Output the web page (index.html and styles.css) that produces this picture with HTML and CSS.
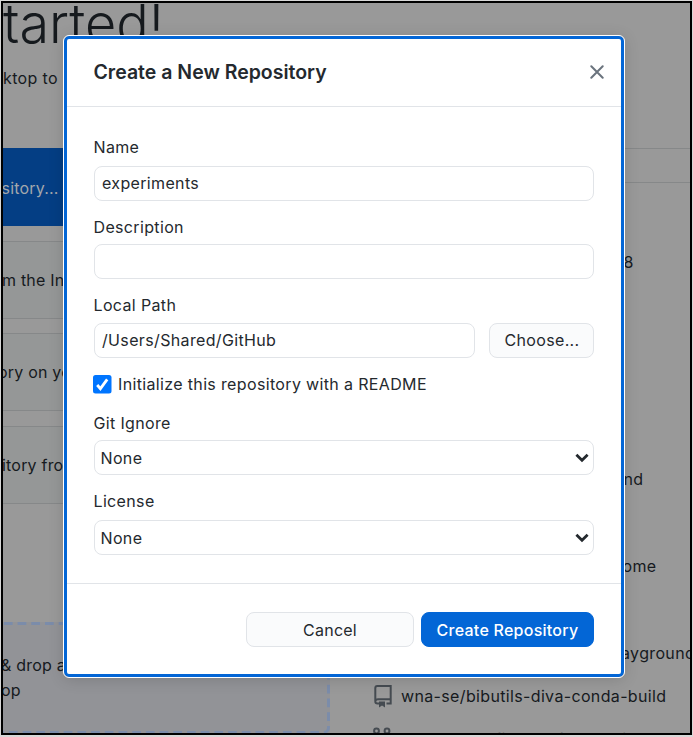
FILE: index.html
```html
<!DOCTYPE html>
<html lang="en">
<head>
<meta charset="utf-8">
<title>Create a New Repository</title>
<link rel="stylesheet" href="styles.css">
</head>
<body>
<div class="window">
  <main class="start">
    <section class="actions">
      <h1>tarted!</h1>
      <p class="intro">ktop to</p>
      <div class="cards">
        <div class="card primary">sitory...</div>
        <div class="card">m the In</div>
        <div class="card shifted">ory on yo</div>
        <div class="card">itory fro</div>
      </div>
      <div class="drop">
        <svg class="drop-outline" width="360" height="112"><rect x="1.5" y="1.5" width="357" height="109" rx="5"/></svg>
        <p>&amp; drop a<br>op</p>
      </div>
    </section>
    <section class="repos">
      <div class="filter"></div>
      <ul>
        <li class="tail r1">8</li>
        <li class="tail r2">nd</li>
        <li class="tail r3">ome</li>
        <li class="tail r4">ayground</li>
        <li class="repo"><svg width="24" height="26" viewBox="0 0 24 26"><path d="M7.5 20.5H5.5a2.2 2.2 0 0 1-2.2-2.2V5a2 2 0 0 1 2-2h13.4v17.5h-4.2M3.5 17.800q.5-1.600 2.500-1.600h12.700"/><path class="fill" d="M7 18.500h6v6l-3-2-3 2z"/></svg>wna-se/bibutils-diva-conda-build</li>
        <li class="repo last"><svg width="24" height="26" viewBox="0 0 24 26"><circle cx="4.500" cy="5" r="2.400"/><circle cx="15" cy="5" r="2.400"/></svg>wna-se/config-nextflow-main-d</li>
      </ul>
    </section>
  </main>
  <div class="dialog" role="dialog" aria-label="Create a New Repository">
    <header>
      <h2>Create a New Repository</h2>
      <svg class="close" width="14" height="14" viewBox="0 0 14 14"><path d="M1.300 1.300l11.400 11.400M12.700 1.300L1.300 12.700"/></svg>
    </header>
    <form>
      <div class="field"><label>Name</label><div class="control">experiments</div></div>
      <div class="field"><label>Description</label><div class="control"></div></div>
      <div class="field"><label>Local Path</label>
        <div class="path"><div class="control">/Users/Shared/GitHub</div><button type="button" class="choose">Choose...</button></div>
      </div>
      <div class="check"><svg width="19" height="19" viewBox="0 0 19 19"><rect width="18.500" height="18.500" rx="2.500"/><path d="M4.200 10l3.200 3.700L14.200 4.400"/></svg><span>Initialize this repository with a README</span></div>
      <div class="field"><label>Git Ignore</label><div class="control select"><span>None</span><svg width="14" height="10" viewBox="0 0 14 10"><path d="M1.400 1.800L7 7.200l5.600-5.400"/></svg></div></div>
      <div class="field"><label>License</label><div class="control select"><span>None</span><svg width="14" height="10" viewBox="0 0 14 10"><path d="M1.400 1.800L7 7.200l5.600-5.400"/></svg></div></div>
    </form>
    <footer>
      <button type="button" class="cancel">Cancel</button>
      <button type="button" class="submit">Create Repository</button>
    </footer>
  </div>
</div>
</body>
</html>
```
FILE: styles.css
```css
* { box-sizing: border-box; }
body { margin: 0; height: 737px; overflow: hidden; background: #d8d8d8; font: 16px/24px Inter, "Liberation Sans", sans-serif; letter-spacing: .35px; color: #24292e; }
h1, h2, p, ul { margin: 0; padding: 0; }
button { font: inherit; letter-spacing: inherit; color: inherit; padding: 0; }
svg { display: block; flex: none; }
.window { width: 691px; height: 734px; margin: 1px 0 0 1px; border: 2px solid #000; overflow: hidden; position: relative; background: #999; }
.start { display: grid; grid-template-columns: 327px 1fr; height: 730px; color: #161a1e; white-space: nowrap; }
.actions, .repos { min-width: 0; overflow: hidden; }
.actions { display: flex; flex-direction: column; }
h1 { height: 63px; font-size: 54px; line-height: 42px; font-weight: 300; letter-spacing: 0; }
.intro { height: 82px; }
.cards { display: grid; gap: 14.500px; height: 474px; grid-auto-rows: 78px; align-content: start; }
.card { border: 1px solid #868889; background: #959797; border-left: 0; line-height: 77px; letter-spacing: .2px; text-indent: -1px; }
.card.shifted { text-indent: -5px; }
.card.primary { background: #043e84; border-color: #043e84; color: #a3a7ac; text-indent: -1.500px; line-height: 78px; }
.drop { height: 111px; background: #929397; position: relative; padding-top: 31px; line-height: 25px; letter-spacing: .2px; }
.drop p { margin-left: -2px; }
.drop-outline { position: absolute; right: 0; top: 0; fill: none; stroke: #7b8caa; stroke-width: 3; stroke-dasharray: 8.700 5; }
.filter { height: 35px; margin-top: 145px; border: solid #868889; border-width: 1px 0; }
ul { list-style: none; }
.tail { padding-left: 293.500px; height: 24px; }
.r1 { margin-top: 67px; }
.r2 { margin-top: 193px; }
.r3 { margin-top: 63px; padding-left: 292.500px; }
.r4 { margin-top: 63px; padding-left: 291px; }
.repo { display: flex; align-items: center; gap: 5px; height: 26px; margin: 18px 0 0 42px; }
.repo.last { margin-top: 17px; }
.repo svg { fill: none; stroke: #454b51; stroke-width: 2; }
.repo svg .fill { fill: #454b51; stroke: none; }
.dialog { position: absolute; left: 61px; top: 33px; width: 560px; height: 641px; border: 3px solid #0366d6; border-radius: 5px; outline: 1px solid #fff; background: #fff; box-shadow: 0 2px 16px rgba(0,0,0,.16); display: flex; flex-direction: column; }
header { height: 68px; border-bottom: 1px solid #e1e4e8; display: flex; align-items: center; justify-content: space-between; padding: 0 17px 2px 26.500px; }
h2 { font-size: 19.500px; font-weight: 600; letter-spacing: 0; }
.close { fill: none; stroke: #6a737d; stroke-width: 2; stroke-linecap: round; }
form { height: 476px; padding: 28px 27px 0 26.500px; display: grid; grid-template-rows: 80px 78px 79px 39px 78px 80px; align-content: start; }
.field { display: flex; flex-direction: column; padding-bottom: 14px; min-width: 0; }
.field label { flex: 1; }
.control { height: 35px; border: 1px solid #e1e4e8; border-radius: 8px; padding: 0 7.500px; line-height: 33px; flex: none; }
.path { display: flex; gap: 14px; }
.path .control { flex: 1; }
.choose { width: 105px; height: 35px; border: 1px solid #e1e4e8; border-radius: 8px; background: #fafbfc; padding: 0 0 1px 1px; }
.check { display: flex; align-items: center; height: 25px; gap: 6px; }
.check svg { margin-left: -.5px; }
.check span { margin-top: -1px; }
.check rect { fill: #0075ff; }
.check path { fill: none; stroke: #fff; stroke-width: 2.800; }
.select { display: flex; align-items: center; justify-content: space-between; padding: 0 4px 0 6px; }
.select span { padding-top: 1px; }
.select path { fill: none; stroke: #24292e; stroke-width: 2.800; }
footer { flex: 1; border-top: 1px solid #e1e4e8; display: flex; justify-content: flex-end; gap: 7px; padding: 28px 27px 0; }
footer button { height: 35px; border-radius: 8px; border: 1px solid #e1e4e8; letter-spacing: .25px; }
.cancel { width: 168px; background: #fafbfc; }
.submit { width: 173px; background: #0366d6; border-color: #0366d6; color: #fff; font-weight: 500; }
```
